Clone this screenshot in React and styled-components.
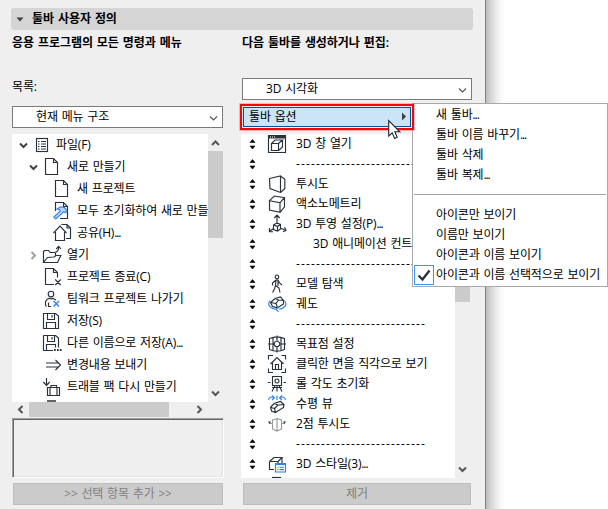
import React from "react";
import styled, { createGlobalStyle } from "styled-components";

const GlobalStyle = createGlobalStyle`
  * { box-sizing: border-box; }
  body {
    margin: 0;
    background: #fff;
    color: #000;
    font: 12px/20px "Open Sans", "Noto Sans CJK KR", sans-serif;
    word-spacing: 0.9px;
    letter-spacing: -0.15px;
    overflow: hidden;
  }
`;

const Page = styled.div`
  position: relative;
  width: 608px;
  height: 509px;
  overflow: hidden;
  display: flex;
  background: #fff;
`;

const Dialog = styled.div`
  width: 486px;
  height: 509px;
  padding: 8px 0 0 11px;
  background: #efefef;
  border-right: 1px solid #6688a3;
`;

const DialogShadow = styled.div`
  width: 20px;
  height: 509px;
  background: linear-gradient(90deg, #bdbdbd 0%, #d6d6d6 25%, #eeeeee 55%, #fbfbfb 80%, #ffffff 100%);
`;

const SectionHeader = styled.div`
  display: flex;
  align-items: center;
  gap: 8px;
  width: 462px;
  height: 22px;
  padding: 0 0 0 5px;
  border-radius: 3px;
  background: #d5d5d5;
  font-weight: 600;
  letter-spacing: -0.05px;
`;

const Columns = styled.div`
  display: grid;
  grid-template-columns: 229px 232px;
`;

const Column = styled.div`
  display: flex;
  flex-direction: column;
  padding-left: 1px;
`;

const Title = styled.div`
  height: 44px;
  padding-left: ${(p) => p.$indent || 0}px;
  line-height: 25px;
  font-weight: 600;
  letter-spacing: -0.05px;
  white-space: nowrap;
`;

const Caption = styled.div`
  height: 32px;
  line-height: 25px;
`;

const Select = styled.div`
  display: flex;
  align-items: center;
  justify-content: space-between;
  flex: none;
  width: ${(p) => p.$width}px;
  height: 22px;
  margin: ${(p) => p.$margin || "0"};
  padding: 0 4px 0 23px;
  border: 1px solid #7a7a7a;
  background: #fff;

  svg { margin-top: 2px; }
`;

const OptionFrame = styled.div`
  position: relative;
  z-index: 3;
  width: 174px;
  height: 26px;
  margin: 4px 0 0 -1px;
  padding: 1px;
  border: 2px solid #fb0207;
  background: #efefef;
  box-shadow: 0 0 0 1px rgba(251, 2, 7, 0.25);
`;

const OptionButton = styled.div`
  display: flex;
  align-items: center;
  justify-content: space-between;
  height: 20px;
  padding: 0 3px 1px 5px;
  border: 1px solid #00549b;
  background: #cce4f7;
`;

const ListArea = styled.div`
  display: flex;
  width: ${(p) => p.$width}px;
  height: ${(p) => p.$height}px;
  margin-top: ${(p) => p.$top}px;
`;

const ListBox = styled.div`
  flex: 1;
  min-width: 0;
  overflow: hidden;
  background: #fff;
`;

const ListRows = styled.div`
  margin-top: -1px;
`;

const VScroll = styled.div`
  display: flex;
  flex-direction: column;
  align-items: center;
  flex: none;
  width: 15px;
  padding: ${(p) => p.$pad};
`;

const VThumb = styled.div`
  width: 15px;
  height: ${(p) => p.$height}px;
  margin-top: ${(p) => p.$gap || 0}px;
  background: #cbcbcb;
`;

const Spacer = styled.div`
  flex: 1;
`;

const HScroll = styled.div`
  display: flex;
  align-items: center;
  width: 196px;
  height: 15px;
  padding: 0 5px;
`;

const HThumb = styled.div`
  width: 140px;
  height: 15px;
  margin-left: 5px;
  background: #cbcbcb;
`;

const TreeRow = styled.div`
  display: flex;
  height: 22px;
  padding-left: ${(p) => 6 + p.$level * 10}px;
  line-height: 23px;
  white-space: nowrap;
`;

const Twisty = styled.div`
  display: flex;
  align-items: center;
  justify-content: center;
  flex: none;
  width: 13px;
  height: 25px;
  padding-right: 2px;
`;

const TreeLabel = styled.div`
  margin-left: ${(p) => (p.$level ? 4 : 3)}px;
`;

const CommandRow = styled.div`
  display: flex;
  align-items: center;
  height: 20px;
  padding-left: 8px;
  white-space: nowrap;
`;

const GripArt = styled.div`
  flex: none;
  height: 13px;
  padding-top: 1px;
`;

const IconSlot = styled.div`
  flex: none;
  width: 24px;
  height: 24px;
  margin: 0 6px 0 10px;
`;

const CommandLabel = styled.div`
  height: 20px;
  line-height: 21px;
  padding-left: ${(p) => (p.$nested ? 17 : 0)}px;
`;

const Dashes = styled.div`
  height: 20px;
  line-height: 22px;
  letter-spacing: 1.14px;
`;

const InfoBox = styled.div`
  width: 212px;
  height: 60px;
  margin-top: 1px;
  border: 1px solid;
  border-color: #9f9f9f #fff #fff #9f9f9f;
  box-shadow: inset 1px 1px 0 #666, inset -1px -1px 0 #e3e3e3;
`;

const ActionButton = styled.div`
  width: ${(p) => p.$width}px;
  height: 22px;
  margin: ${(p) => p.$margin};
  border: 1px solid #bcbcbc;
  background: #cbcbcb;
  color: #808080;
  line-height: 19px;
  text-align: center;
`;

const Menu = styled.div`
  position: absolute;
  z-index: 2;
  left: 412px;
  top: 103px;
  width: 196px;
  height: 184px;
  border: 1px solid #a9a9ad;
  background: #fff;
`;

const MenuItem = styled.div`
  display: flex;
  height: 20px;
  padding-left: 1px;
  line-height: 21px;
  white-space: nowrap;
`;

const MenuCheck = styled.div`
  display: flex;
  align-items: center;
  justify-content: center;
  flex: none;
  width: 20px;
  height: 20px;
  margin: 1px 2px 0 0;
  border: 1px solid ${(p) => (p.$on ? "#3399ff" : "transparent")};
`;

const MenuLine = styled.div`
  display: flex;
  align-items: center;
  height: 20px;
  padding: 0 1px;

  &::after {
    content: "";
    flex: 1;
    height: 1px;
    background: #a0a0a0;
  }
`;

const Pointer = styled.svg`
  position: absolute;
  z-index: 4;
  left: 388px;
  top: 119px;
`;

const Tight = styled.span`
  letter-spacing: -1.1px;
`;

const Art = styled.svg`
  display: block;
  flex: none;
  fill: none;
  stroke: #27323a;
  stroke-width: 1.15;
`;

const BLUE = "#2f80ed";

function Label({ children }) {
  if (!children.endsWith("...")) return children;
  return (
    <span>
      {children.slice(0, -3)}
      <Tight>...</Tight>
    </span>
  );
}

const docShape = "M4.5 3.5H12.5L16.5 7.5V19.5H4.5ZM12.5 3.5V7.5H16.5";
const floppy = "M2.5 4.5H14.5L17.5 7V19.5H2.5ZM6.5 4.5V10.5H13.5V4.5M5.5 19.5V13.5H14.5V19.5M11 6V8.5";

const treeArt = {
  menu: (
    <>
      <rect x="5.5" y="5.5" width="11" height="13" />
      <path d="M7 8.5h1.5M7 11h1.5M7 13.5h1.5M7 16h1.5M10 8.5h5M10 11h5M10 13.5h5M10 16h5" strokeWidth="1" />
    </>
  ),
  doc: <path d={docShape} />,
  reset: (
    <>
      <path d="M4.5 12V3.5H12.5L16.5 7.5V19.5H9M12.5 3.5V7.5H16.5" />
      <path
        d="M6 10L9.5 7.8L13.5 8.6L15.8 11.5L14.8 13.8L12.5 12.8L11.2 14.2L4.8 20L2.8 18L9.2 12.2L8.6 10.8Z"
        stroke={BLUE}
        fill="#b8d6ff"
      />
    </>
  ),
  share: <path d="M11 4V3.5H16L19.5 7V17.5H15M16 3.5V7H19.5M2.5 12L9 5L15.5 12M4.5 11V19.5H13.5V11" />,
  open: (
    <path d="M2.5 19.5V8.5L3.5 7.5H7.5L9 9.5H14.5V12.5M2.5 19.5L6.5 14.5L13 14L15 12.5H19.8L16.5 19.5ZM13.5 9.5C17 9 17.7 7 17.7 4M15.2 6L17.7 3.3L20 6" />
  ),
  close: <path d="M13 19.5H4.5V3.5H12.5L16.5 7.5V12.5M12.5 3.5V7.5H16.5M14.3 14.5L19.7 20M19.7 14.5L14.3 20" />,
  leave: (
    <>
      <circle cx="10" cy="7" r="2.8" />
      <path d="M10 19.5H7M5.5 19.5L4.5 18V14.5L6.5 12L8 11.5M12 11.5L15 13" />
      <path d="M7.5 11C9 12 11 12 12.5 11M7.5 15.5V19" />
      <path d="M12.5 14L18 19.5M18 14L12.5 19.5" stroke={BLUE} strokeWidth="1.4" />
    </>
  ),
  save: <path d={floppy} />,
  saveAs: (
    <>
      <path d="M2.5 4.5H14.5L17.5 7V16.5M2.5 4.5V19.5H12M6.5 4.5V10.5H13.5V4.5M5.5 19.5V13.5H14.5V16.5M11 6V8.5" />
      <path d="M13 19h1.7M16 19h1.7M18.8 19h1.7" strokeWidth="2" />
    </>
  ),
  send: <path d="M5 10H17M5 14H17M14.5 7L19.5 12L14.5 17" />,
  travel: (
    <path d="M5.5 3V10.5M2.3 7L5.5 10.5L8.7 7M6.5 12.5H18.5V20.5H6.5ZM10 12.5V10.5H15.5V12.5M9 12.5V20.5M16 12.5V20.5" />
  ),
  next: <path d="M6 4H15" strokeWidth="1.5" />,
};

const commandArt = {
  window: (
    <>
      <path d="M2.5 4.5H19.5V21.5H2.5Z" />
      <path d="M2 6H20" strokeWidth="3" />
      <path d="M4 6h1M6 6h1M8 6h1" stroke="#fff" strokeWidth="1" />
      <path d="M5.5 12.5H12.5V19.5H5.5ZM5.5 12.5L9 9H16.5L12.5 12.5M16.5 9V16L12.5 19.5" />
    </>
  ),
  perspective: <path d="M3.5 7.5L14.5 5V21.5L4 17.5ZM14.5 5L18.8 8.3V17.5L14.5 21.5" />,
  axo: <path d="M3.5 9.7L14 11.7V21.3L3.5 19ZM3.5 9.7L8.3 5L18.5 6.7L14 11.7M18.5 6.7V15.8L14 21.3" />,
  projection: (
    <path d="M11 13V4M8.3 7L11 4L13.7 7M8 17L3.3 20.5M3.5 17V20.7H7M14 17L20 19.5M17 20.7L20 19.5L18.5 16.3M7.5 14L11 12L14.5 13.5V18L11.5 20L7.5 18.5ZM7.5 14L11.5 15.5V20M11.5 15.5L14.5 13.5" />
  ),
  walk: (
    <path d="M11 4A1.8 1.8 0 1 1 10.9 4M10 9L6.5 12V14.5M10 9H12L13.5 12L16 14M10 9L9.5 14.5L8.5 18L6.5 21.5M9.5 14.5L13 17L14 21.5M12 9L12 15" />
  ),
  orbit: (
    <>
      <path d="M4.5 11.5L9 7.5L14.5 6L17.5 9.5V13L11.5 16.8L6.5 15.5ZM4.5 11.5L10 12.5L11.5 16.8M10 12.5L12.5 9L17.5 9.5M12.5 9L9 7.5" />
      <path d="M4 9.5C0.5 14 5 17.8 10 18.3M18.5 9.5C22 14 18 17.8 13 18.3M12.5 16L10 18.3L12.5 20.8" stroke={BLUE} />
    </>
  ),
  target: (
    <path d="M3.5 7.5C8 5.5 14 5.5 18.5 7.5V18.5C14 20.5 8 20.5 3.5 18.5ZM11 4.5V10M11 16V21.5M2 13H8M14 13H20M7 6.5V19.7M15 6.5V19.7M11 10.2A2.8 2.8 0 1 1 10.9 10.2" />
  ),
  face: (
    <path d="M2.5 8.5V4.5H7M15.5 4.5H19.5V8.5M19.5 17.5V21.5H15.5M7 21.5H2.5V17.5M4.5 13L11 6.5L17.5 13M6.5 11.5V18.5H15.5V11.5M9.5 18.5V13.5H12.5V18.5" />
  ),
  roll: (
    <path d="M6.5 5.5H15.5V14.5H6.5ZM11 8A2 2 0 1 1 10.9 8M2 11.5H4.5M17.5 11.5H20M11 14.5V20.5M9 14.5L6 20.5M13 14.5L16 20.5M6 16.5H16" />
  ),
  level: (
    <>
      <path d="M4.5 16.5L8 12.5L14.5 10.5L18 13.5L17.5 16.5L9.5 21.5L5.5 20ZM4.5 16.5L8.5 17.5L9.5 21.5M8.5 17.5L12 14L18 13.5M12 14L8 12.5" />
      <path d="M11 4.5V9M2.5 9C3 6 5.5 5.5 8 6.5M6 4.3L8.5 6.7L6 9M19.5 9C19 6 16.5 5.5 14 6.5M16 4.3L13.5 6.7L16 9" stroke={BLUE} />
    </>
  ),
  twoPoint: (
    <>
      <path d="M6.5 9L11 7.5L15.5 9V18L11 20L6.5 18ZM11 7.5V20" stroke="#969a9d" />
      <path d="M6.5 12.5H3.5M15.5 12.5H18.5" stroke="#969a9d" />
      <path d="M2 10.5H5L3.5 13ZM17 10.5H20L18.5 13Z" fill="#27323a" stroke="none" />
    </>
  ),
  style: (
    <>
      <path d="M3.5 10.5H12M3.5 10.5V18.5H8M3.5 10.5L8 6.5H16L12 10.5V12M16 6.5V12" />
      <path d="M9.5 12.5H19.5V21H9.5Z" stroke={BLUE} fill="#fff" />
      <path d="M9.5 13H19.5" stroke={BLUE} strokeWidth="2" />
      <path d="M11.3 16.2h1.2M13.5 16.2h4.5M11.3 18.6h1.2M13.5 18.6h4.5" stroke={BLUE} />
    </>
  ),
  next: <path d="M6 6.5H15" strokeWidth="1.2" />,
};

const tree = [
  [0, "down", "menu", "파일(F)"],
  [1, "down", "doc", "새로 만들기"],
  [2, null, "doc", "새 프로젝트"],
  [2, null, "reset", "모두 초기화하여 새로 만들"],
  [2, null, "share", "공유(H)..."],
  [1, "right", "open", "열기"],
  [1, null, "close", "프로젝트 종료(C)"],
  [1, null, "leave", "팀워크 프로젝트 나가기"],
  [1, null, "save", "저장(S)"],
  [1, null, "saveAs", "다른 이름으로 저장(A)..."],
  [1, null, "send", "변경내용 보내기"],
  [1, null, "travel", "트래블 팩 다시 만들기"],
  [1, null, "next", ""],
];

const commands = [
  ["window", "3D 창 열기"],
  ["-"],
  ["perspective", "투시도"],
  ["axo", "액소노메트리"],
  ["projection", "3D 투영 설정(P)..."],
  [null, "3D 애니메이션 컨트"],
  ["-"],
  ["walk", "모델 탐색"],
  ["orbit", "궤도"],
  ["-"],
  ["target", "목표점 설정"],
  ["face", "클릭한 면을 직각으로 보기"],
  ["roll", "롤 각도 초기화"],
  ["level", "수평 뷰"],
  ["twoPoint", "2점 투시도"],
  ["-"],
  ["style", "3D 스타일(3)..."],
  ["next", ""],
];

const menuGroups = [
  ["새 툴바...", "툴바 이름 바꾸기...", "툴바 삭제", "툴바 복제..."],
  ["아이콘만 보이기", "이름만 보이기", "아이콘과 이름 보이기", "아이콘과 이름 선택적으로 보이기"],
];

const chevrons = {
  down: ["M1 1.5L4.5 5L8 1.5", 9, 7],
  up: ["M1 5L4.5 1.5L8 5", 9, 7],
  left: ["M5.5 1L2 4.5L5.5 8", 7, 9],
  right: ["M1.5 1L5 4.5L1.5 8", 7, 9],
};

function Chevron({ dir, color = "#555", weight = 2 }) {
  const [d, w, h] = chevrons[dir];
  return (
    <Art width={w} height={h} viewBox={`0 0 ${w} ${h}`}>
      <path d={d} stroke={color} strokeWidth={weight} />
    </Art>
  );
}

function Grip() {
  return (
    <GripArt>
      <Art width="7" height="12" viewBox="0 0 7 12">
        <path d="M3.5 1.5L6 4.5H1ZM3.5 11L6 8H1Z" fill="#000" stroke="#000" strokeWidth="0.6" />
      </Art>
    </GripArt>
  );
}

export default function App() {
  return (
    <Page>
      <GlobalStyle />
      <Dialog>
        <SectionHeader>
          <Art width="8" height="6" viewBox="0 0 8 6">
            <path d="M0.5 1.5H7.5L4 5.5Z" fill="#404040" stroke="none" />
          </Art>
          툴바 사용자 정의
        </SectionHeader>
        <Columns>
          <Column>
            <Title>응용 프로그램의 모든 명령과 메뉴</Title>
            <Caption>목록:</Caption>
            <Select $width={211}>
              현재 메뉴 구조
              <Chevron dir="down" weight={1.2} />
            </Select>
            <ListArea $width={211} $height={268} $top={6}>
              <ListBox>
                <ListRows>
                  {tree.map(([level, twisty, art, label], i) => (
                    <TreeRow key={i} $level={level}>
                      <Twisty>
                        {twisty && <Chevron dir={twisty} color={twisty === "right" ? "#a0a0a0" : "#404040"} />}
                      </Twisty>
                      <Art width="22" height="22" viewBox="0 0 22 22">{treeArt[art]}</Art>
                      <TreeLabel $level={level}><Label>{label}</Label></TreeLabel>
                    </TreeRow>
                  ))}
                </ListRows>
              </ListBox>
              <VScroll $pad="6px 0 5px">
                <Chevron dir="up" />
                <VThumb $height={87} $gap={4} />
                <Spacer />
                <Chevron dir="down" />
              </VScroll>
            </ListArea>
            <HScroll>
              <Chevron dir="left" />
              <HThumb />
              <Spacer />
              <Chevron dir="right" />
            </HScroll>
            <InfoBox />
            <ActionButton $width={210} $margin="5px 0 0 1px">&gt;&gt; 선택 항목 추가 &gt;&gt;</ActionButton>
          </Column>
          <Column>
            <Title $indent={1}>다음 툴바를 생성하거나 편집:</Title>
            <Select $width={230} $margin="4px 0 0 1px">
              3D 시각화
              <Chevron dir="down" weight={1.2} />
            </Select>
            <OptionFrame>
              <OptionButton>
                툴바 옵션
                <Art width="6" height="9" viewBox="0 0 6 9">
                  <path d="M1 0.5V8.5L5 4.5Z" fill="#404040" stroke="none" />
                </Art>
              </OptionButton>
            </OptionFrame>
            <ListArea $width={229} $height={344} $top={4}>
              <ListBox>
                <ListRows>
                  {commands.map(([art, label], i) => (
                    <CommandRow key={i}>
                      <Grip />
                      <IconSlot>
                        <Art width="24" height="24" viewBox="0 0 24 24">{commandArt[art]}</Art>
                      </IconSlot>
                      {art === "-" ? (
                        <Dashes>{"-".repeat(26)}</Dashes>
                      ) : (
                        <CommandLabel $nested={art === null}><Label>{label}</Label></CommandLabel>
                      )}
                    </CommandRow>
                  ))}
                </ListRows>
              </ListBox>
              <VScroll $pad="17px 0 5px">
                <VThumb $height={151} />
                <Spacer />
                <Chevron dir="down" />
              </VScroll>
            </ListArea>
            <ActionButton $width={228} $margin="5px 0 0 2px">제거</ActionButton>
          </Column>
        </Columns>
      </Dialog>
      <DialogShadow />
      <Menu>
        {menuGroups[0].map((text) => (
          <MenuItem key={text}>
            <MenuCheck />
            <Label>{text}</Label>
          </MenuItem>
        ))}
        <MenuLine />
        {menuGroups[1].map((text, i) => (
          <MenuItem key={text}>
            <MenuCheck $on={i === 3}>
              {i === 3 && (
                <Art width="14" height="14" viewBox="0 0 14 14">
                  <path d="M1.5 7.5L5.5 11.5L12.5 2.5" strokeWidth="2.3" />
                </Art>
              )}
            </MenuCheck>
            <Label>{text}</Label>
          </MenuItem>
        ))}
      </Menu>
      <Pointer width="14" height="21" viewBox="0 0 14 21">
        <path
          d="M0.7 1.5V17L4.2 13.8L6.7 19.5L9.2 18.3L6.8 12.8H11.8Z"
          fill="#fff"
          stroke="#1c2430"
          strokeWidth="1.1"
        />
      </Pointer>
    </Page>
  );
}
